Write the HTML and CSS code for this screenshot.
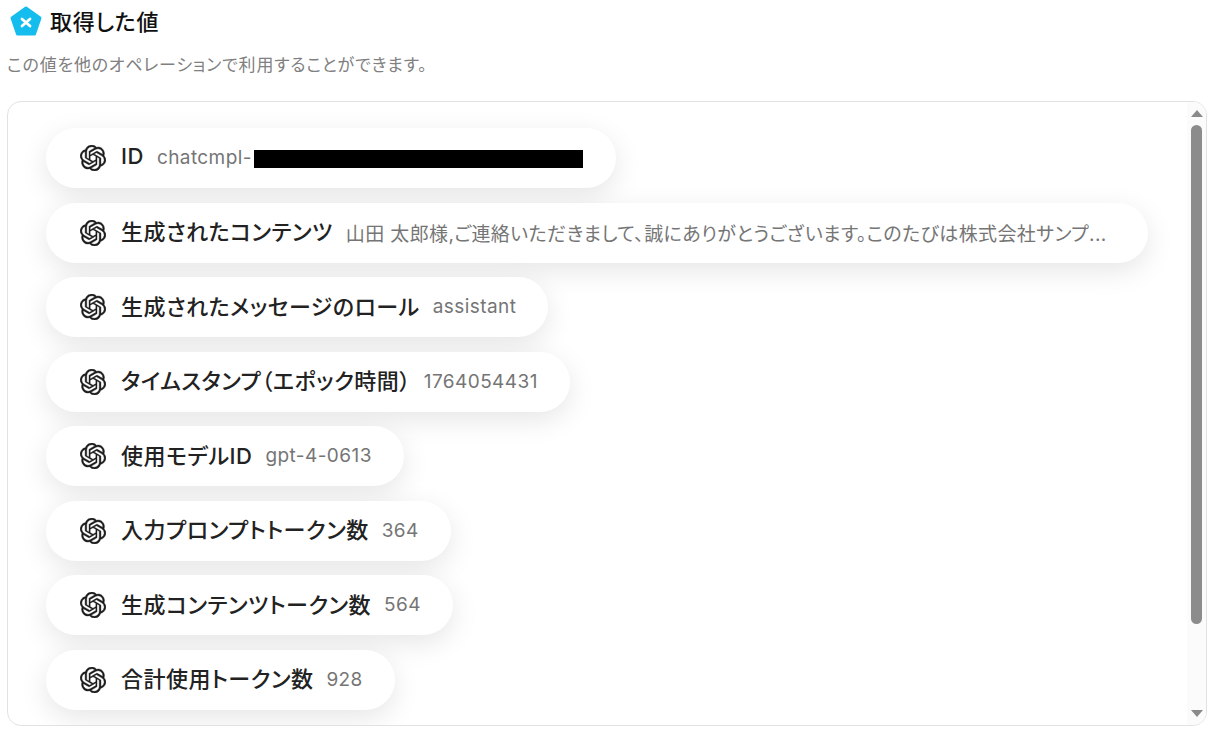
FILE: index.html
```html
<!DOCTYPE html>
<html lang="ja">

<head>
	<meta charset="utf-8" />
	<title>取得した値</title>
	<meta name="viewport" content="width=device-width, initial-scale=1" />
	<link rel="stylesheet" href="styles.css">
</head>

<body>
	<svg class="defs" width="0" height="0">
		<symbol id="gpt" viewBox="0 0 24 24">
			<path d="M22.2819 9.8211a5.9847 5.9847 0 0 0-.5157-4.9108 6.0462 6.0462 0 0 0-6.5098-2.9A6.0651 6.0651 0 0 0 4.9807 4.1818a5.9847 5.9847 0 0 0-3.9977 2.9 6.0462 6.0462 0 0 0 .7427 7.0966 5.98 5.98 0 0 0 .511 4.9107 6.051 6.051 0 0 0 6.5146 2.9001A5.9847 5.9847 0 0 0 13.2599 24a6.0557 6.0557 0 0 0 5.7718-4.2058 5.9894 5.9894 0 0 0 3.9977-2.9001 6.0557 6.0557 0 0 0-.7475-7.0729zm-9.022 12.6081a4.4755 4.4755 0 0 1-2.8764-1.0408l.1419-.0804 4.7783-2.7582a.7948.7948 0 0 0 .3927-.6813v-6.7369l2.02 1.1686a.071.071 0 0 1 .038.052v5.5826a4.504 4.504 0 0 1-4.4945 4.4944zm-9.6607-4.1254a4.4708 4.4708 0 0 1-.5346-3.0137l.142.0852 4.783 2.7582a.7712.7712 0 0 0 .7806 0l5.8428-3.3685v2.3324a.0804.0804 0 0 1-.0332.0615L9.74 19.9502a4.4992 4.4992 0 0 1-6.1408-1.6464zM2.3408 7.8956a4.485 4.485 0 0 1 2.3655-1.9728V11.6a.7664.7664 0 0 0 .3879.6765l5.8144 3.3543-2.0201 1.1685a.0757.0757 0 0 1-.071 0l-4.8303-2.7865A4.504 4.504 0 0 1 2.3408 7.872zm16.5963 3.8558L13.1038 8.364 15.1192 7.2a.0757.0757 0 0 1 .071 0l4.8303 2.7913a4.4944 4.4944 0 0 1-.6765 8.1042v-5.6772a.79.79 0 0 0-.407-.667zm2.0107-3.0231l-.142-.0852-4.7735-2.7818a.7759.7759 0 0 0-.7854 0L9.409 9.2297V6.8974a.0662.0662 0 0 1 .0284-.0615l4.8303-2.7866a4.4992 4.4992 0 0 1 6.6802 4.66zM8.3065 12.863l-2.02-1.1638a.0804.0804 0 0 1-.038-.0567V6.0742a4.4992 4.4992 0 0 1 7.3757-3.4537l-.142.0805L8.704 5.459a.7948.7948 0 0 0-.3927.6813zm1.0976-2.3654l2.602-1.4998 2.6069 1.4998v2.9994l-2.5974 1.4997-2.6067-1.4997Z" />
		</symbol>
	</svg>

	<header class="title-row">
		<svg class="logo" viewBox="0 0 32 32">
			<path class="logo-base" d="M16 2 L30 12 L24.5 28 H7.5 L2 12 Z" />
			<path class="logo-x" d="M12 13 L20 20 M20 13 L12 20" />
		</svg>
		<h1>取得した値</h1>
	</header>
	<p class="lead">この値を他のオペレーションで利用することができます。</p>

	<section class="panel">
		<div class="list">
			<div class="pill">
				<svg class="gpt"><use href="#gpt" /></svg>
				<span class="label">ID</span>
				<span class="value">chatcmpl-<span class="redacted"></span></span>
			</div>
			<div class="pill">
				<svg class="gpt"><use href="#gpt" /></svg>
				<span class="label">生成されたコンテンツ</span>
				<span class="value value-long">山田 太郎様,ご連絡いただきまして、誠にありがとうございます。このたびは株式会社サンプ...</span>
			</div>
			<div class="pill">
				<svg class="gpt"><use href="#gpt" /></svg>
				<span class="label">生成されたメッセージのロール</span>
				<span class="value">assistant</span>
			</div>
			<div class="pill">
				<svg class="gpt"><use href="#gpt" /></svg>
				<span class="label">タイムスタンプ（エポック時間）</span>
				<span class="value">1764054431</span>
			</div>
			<div class="pill">
				<svg class="gpt"><use href="#gpt" /></svg>
				<span class="label">使用モデルID</span>
				<span class="value">gpt-4-0613</span>
			</div>
			<div class="pill">
				<svg class="gpt"><use href="#gpt" /></svg>
				<span class="label">入力プロンプトトークン数</span>
				<span class="value">364</span>
			</div>
			<div class="pill">
				<svg class="gpt"><use href="#gpt" /></svg>
				<span class="label">生成コンテンツトークン数</span>
				<span class="value">564</span>
			</div>
			<div class="pill">
				<svg class="gpt"><use href="#gpt" /></svg>
				<span class="label">合計使用トークン数</span>
				<span class="value">928</span>
			</div>
		</div>

		<div class="scrollbar">
			<span class="arrow arrow-up"></span>
			<span class="thumb"></span>
			<span class="arrow arrow-down"></span>
		</div>
	</section>
</body>

</html>
```

FILE: styles.css
```css
* {
	box-sizing: border-box;
}

html,
body {
	height: 100%;
}

body {
	margin: 0;
	overflow: hidden;
	background-color: #fff;
	font-family: Inter, 'Noto Sans CJK JP', sans-serif;
	font-feature-settings: "palt";
	color: #1f1f1f;
}

.defs {
	position: absolute;
}

.title-row {
	display: flex;
	align-items: center;
	gap: 8px;
	height: 30px;
	margin: 7px 0 0 10px;
}

.logo {
	width: 32px;
	height: 32px;
}

.logo-base {
	fill: #15bdee;
	stroke: #15bdee;
	stroke-width: 3;
	stroke-linejoin: round;
}

.logo-x {
	fill: none;
	stroke: #fff;
	stroke-width: 2.8;
	stroke-linecap: round;
}

h1 {
	margin: 0 0 4px;
	font-size: 22px;
	font-weight: 500;
	letter-spacing: 0.7px;
	color: #111;
}

.lead {
	margin: 17px 0 0 7px;
	font-size: 17px;
	line-height: 22px;
	letter-spacing: 0.78px;
	color: #808080;
}

.panel {
	display: flex;
	height: 625px;
	margin: 25px 5px 0 7px;
	border: 1px solid #e2e2e2;
	border-radius: 14px;
	overflow: hidden;
}

.list {
	flex: 1;
	display: flex;
	flex-direction: column;
	align-items: flex-start;
	gap: 14.5px;
	padding: 26px 0 0 38px;
}

.pill {
	display: flex;
	align-items: center;
	height: 60px;
	padding: 0 32px 0 34px;
	border-radius: 30px;
	background-color: #fff;
	box-shadow: 0 8px 28px rgba(0, 0, 0, 0.1);
}

.gpt {
	width: 26px;
	height: 26px;
	margin-right: 15px;
	fill: #1c1c1c;
	stroke: #1c1c1c;
	stroke-width: 0.35;
}

.label {
	margin-bottom: 5px;
	font-size: 22px;
	font-weight: 500;
	letter-spacing: 0.5px;
	color: #222;
}

.value {
	margin: 0 0 1px 13px;
	font-size: 19px;
	letter-spacing: 0.42px;
	color: #757575;
}

/* truncated text sits in a box wider than the ellipsis */
.value-long {
	padding-right: 9px;
	letter-spacing: 0.38px;
}

.redacted {
	display: inline-block;
	width: 329px;
	height: 18px;
	margin: 0 1px 0 2px;
	vertical-align: -4px;
	background-color: #000;
}

.scrollbar {
	display: flex;
	flex-direction: column;
	align-items: center;
	width: 19px;
	padding-top: 8px;
	background-color: #fbfbfb;
}

.arrow {
	width: 0;
	height: 0;
	border-left: 6px solid transparent;
	border-right: 6px solid transparent;
}

.arrow-up {
	border-bottom: 7px solid #8a8a8a;
}

.arrow-down {
	margin-top: 86px;
	border-top: 7px solid #8a8a8a;
}

.thumb {
	width: 11px;
	height: 499px;
	margin-top: 8px;
	border-radius: 6px;
	background-color: #8c8c8c;
}
```
